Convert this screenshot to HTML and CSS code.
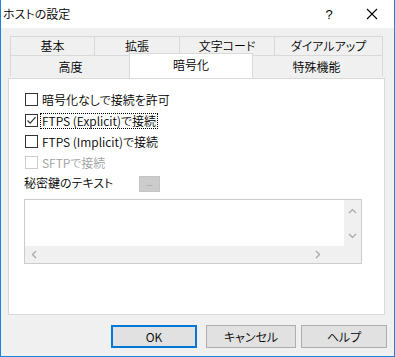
FILE: index.html
```html
<!DOCTYPE html>
<html lang="ja">
<head>
    <meta charset="UTF-8">
    <title>ホストの設定</title>
    <link rel="stylesheet" href="styles.css">
</head>
<body>
    <div class="window">
        <div class="titlebar">
            <span class="title">ホストの設定</span>
            <span class="help-btn">?</span>
            <span class="close-btn">
                <svg width="12" height="12" viewBox="0 0 12 12"><path d="M1 1 L11 11 M11 1 L1 11" stroke="#000" stroke-width="1.1" fill="none"/></svg>
            </span>
        </div>

        <div class="client">
            <div class="tabs">
                <div class="tab-row row-back">
                    <div class="tab t-basic">基本</div>
                    <div class="tab t-ext">拡張</div>
                    <div class="tab t-code">文字コード</div>
                    <div class="tab t-dial">ダイアルアップ</div>
                </div>
                <div class="tab-row row-front">
                    <div class="tab t-adv">高度</div>
                    <div class="tab t-enc selected">暗号化</div>
                    <div class="tab t-special">特殊機能</div>
                </div>
            </div>

            <div class="page">
                <div class="check">
                    <span class="box"></span>
                    <span class="label">暗号化なしで接続を許可</span>
                </div>
                <div class="check">
                    <span class="box">
                        <svg width="11" height="11" viewBox="0 0 11 11"><path d="M1.5 5.5 L4.2 8.2 L9.5 2.2" stroke="#333" stroke-width="1.2" fill="none"/></svg>
                    </span>
                    <span class="label focused">FTPS (Explicit)で接続</span>
                </div>
                <div class="check">
                    <span class="box"></span>
                    <span class="label">FTPS (Implicit)で接続</span>
                </div>
                <div class="check disabled">
                    <span class="box"></span>
                    <span class="label">SFTPで接続</span>
                </div>
                <div class="key-row">
                    <span class="key-label">秘密鍵のテキスト</span>
                    <span class="dots-btn">...</span>
                </div>
                <div class="textbox">
                    <div class="text-area"></div>
                    <div class="vscroll">
                        <svg width="9" height="6" viewBox="0 0 9 6"><path d="M1 5 L4.5 1.5 L8 5" stroke="#a6a6a6" stroke-width="1.2" fill="none"/></svg>
                        <svg width="9" height="6" viewBox="0 0 9 6"><path d="M1 1 L4.5 4.5 L8 1" stroke="#a6a6a6" stroke-width="1.2" fill="none"/></svg>
                    </div>
                    <div class="hscroll">
                        <svg width="6" height="9" viewBox="0 0 6 9"><path d="M5 1 L1.5 4.5 L5 8" stroke="#a6a6a6" stroke-width="1.2" fill="none"/></svg>
                        <svg width="6" height="9" viewBox="0 0 6 9"><path d="M1 1 L4.5 4.5 L1 8" stroke="#a6a6a6" stroke-width="1.2" fill="none"/></svg>
                    </div>
                    <div class="corner"></div>
                </div>
            </div>

            <div class="buttons">
                <div class="btn default btn-ok">OK</div>
                <div class="btn btn-cancel">キャンセル</div>
                <div class="btn btn-help">ヘルプ</div>
            </div>
        </div>
    </div>
</body>
</html>
```

FILE: styles.css
```css
* {
    margin: 0;
    padding: 0;
    box-sizing: border-box;
}

body {
    font-family: "Noto Sans CJK JP", "Noto Sans", sans-serif;
    font-size: 12px;
    font-weight: 350;
    font-feature-settings: "palt" 1;
    color: #000;
    background: #fff;
}

.window {
    width: 395px;
    height: 357px;
    border: 1px solid #1c84d8;
    border-top: none;
    background: #f0f0f0;
    display: flex;
    flex-direction: column;
}

/* title bar */
.titlebar {
    height: 28px;
    background: #fff;
    display: flex;
    align-items: center;
    padding-left: 2px;
}

.title {
    flex: 1;
    line-height: 1;
    margin-top: -1px;
}

.help-btn {
    width: 12px;
    margin-right: 31px;
    font-family: "Liberation Sans", sans-serif;
    font-size: 13px;
    font-weight: 400;
    line-height: 1;
    text-align: center;
}

.close-btn {
    width: 12px;
    height: 12px;
    margin-right: 16px;
    display: flex;
}

/* tabs */
.client {
    flex: 1;
    display: flex;
    flex-direction: column;
}

.tabs {
    margin-top: 8px;
    margin-left: 9px;
    width: 373px;
}

.tab-row {
    display: flex;
}

.tab {
    height: 20px;
    border: 1px solid #d9d9d9;
    border-left: none;
    display: flex;
    align-items: center;
    justify-content: center;
    line-height: 1;
    background: #f0f0f0;
}

.tab:first-child {
    border-left: 1px solid #d9d9d9;
}

.row-back .tab {
    padding-bottom: 1px;
}

.row-front .tab {
    border-top: none;
    border-bottom: none;
    padding-top: 1px;
}

.t-basic { width: 85px; }
.t-ext { width: 85px; }
.t-code { width: 95px; }
.t-dial { width: 108px; }

.t-adv { width: 121px; }
.t-special { width: 132px; }

.tab.selected {
    width: 124px;
    height: 25px;
    margin: -3px -2px 0;
    border: 1px solid #d9d9d9;
    border-bottom: none;
    background: #fff;
    position: relative;
    z-index: 1;
    padding-top: 0;
    padding-bottom: 2px;
}

/* page */
.page {
    margin-left: 7px;
    width: 377px;
    height: 237px;
    border: 1px solid #d9d9d9;
    background: #fff;
    padding: 10px 0 0 16px;
}

.check {
    height: 21px;
    display: flex;
    align-items: center;
    gap: 2px;
}

.box {
    width: 13px;
    height: 13px;
    border: 1px solid #333;
    background: #fff;
    display: flex;
    align-items: center;
    justify-content: center;
    flex-shrink: 0;
}

.label {
    line-height: 14px;
    padding: 0 1px;
    border: 1px solid transparent;
}

.label.focused {
    border: 1px dotted #000;
}

.check.disabled .box {
    border-color: #cccccc;
}

.check.disabled .label {
    color: #a0a0a0;
}

.key-row {
    height: 22px;
    display: flex;
    align-items: center;
    margin-left: -1px;
}

.key-label {
    width: 115px;
    line-height: 1;
    margin-top: -2px;
}

.dots-btn {
    width: 21px;
    height: 16px;
    background: #cccccc;
    border: 1px solid #c4c4c4;
    color: #8a8a8a;
    font-size: 8px;
    line-height: 12px;
    text-align: center;
}

/* multi-line text box with scroll bars */
.textbox {
    margin-top: 4px;
    margin-left: -1px;
    width: 338px;
    height: 65px;
    border: 1px solid #cccccc;
    display: grid;
    grid-template-columns: 1fr 17px;
    grid-template-rows: 1fr 17px;
}

.text-area {
    background: #fff;
}

.vscroll {
    background: #f0f0f0;
    display: flex;
    flex-direction: column;
    align-items: center;
    justify-content: space-between;
    padding: 8px 0 7px;
}

.hscroll {
    background: #f0f0f0;
    display: flex;
    align-items: center;
    justify-content: space-between;
    padding: 0 23px 0 6px;
}

.corner {
    background: #f0f0f0;
}

/* dialog buttons */
.buttons {
    margin-top: 10px;
    padding-left: 110px;
    display: flex;
}

.btn {
    height: 23px;
    background: #e1e1e1;
    border: 1px solid #adadad;
    display: flex;
    align-items: center;
    justify-content: center;
    line-height: 1;
}

.btn.default {
    border: 2px solid #0078d7;
}

.btn-ok { width: 86px; }
.btn-cancel { width: 90px; margin-left: 9px; }
.btn-help { width: 86px; margin-left: 5px; }
```
